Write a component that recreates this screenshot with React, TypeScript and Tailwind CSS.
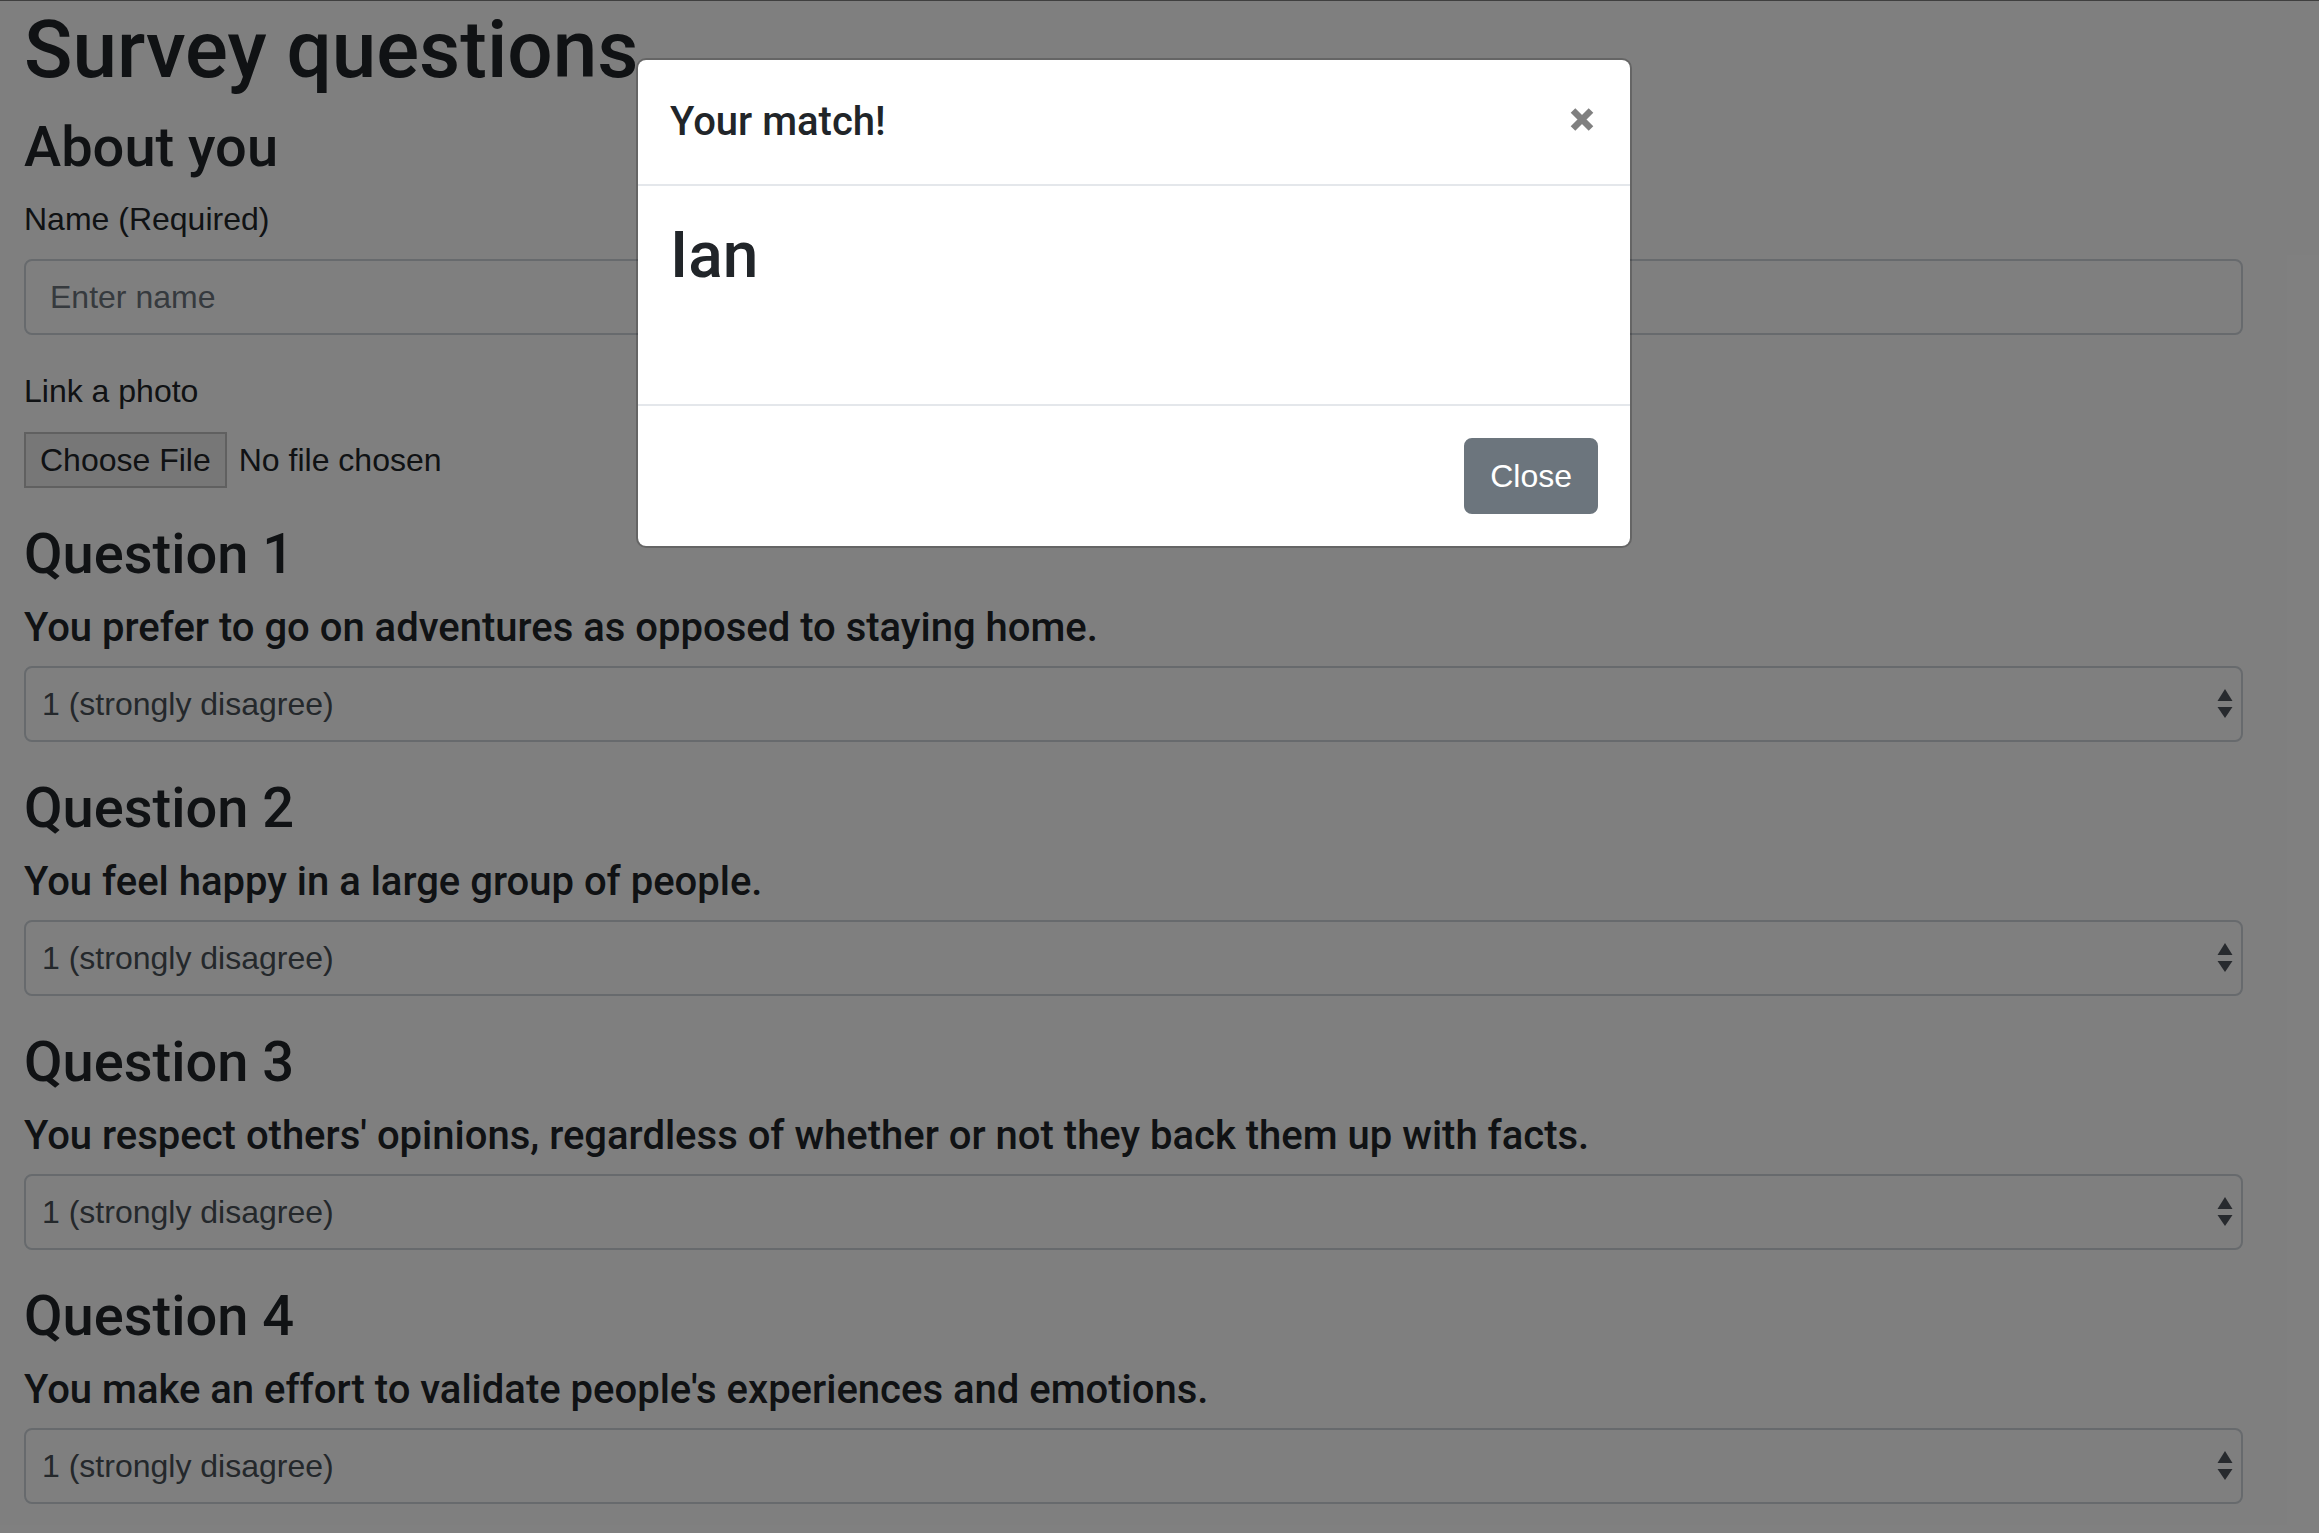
import React from "react";

const questions = [
  "You prefer to go on adventures as opposed to staying home.",
  "You feel happy in a large group of people.",
  "You respect others' opinions, regardless of whether or not they back them up with facts.",
  "You make an effort to validate people's experiences and emotions.",
];

function SelectArrows() {
  return (
    <svg width="16" height="30" viewBox="0 0 16 30" className="shrink-0">
      <polygon points="8,0 15.5,12 0.5,12" fill="#4f545c" />
      <polygon points="0.5,18 15.5,18 8,29" fill="#4f545c" />
    </svg>
  );
}

function FakeSelect() {
  return (
    <div className="flex h-[76px] items-center justify-between rounded-[8px] border-2 border-[#ced4da] bg-white pl-[16px] pr-[8px] text-[32px] leading-[48px] text-[#495057]">
      <span>1 (strongly disagree)</span>
      <SelectArrows />
    </div>
  );
}

export default function App() {
  return (
    <div className="relative h-[1533px] w-full overflow-hidden bg-white font-['Liberation_Sans',Arial,sans-serif] text-[#212529]">
      {/* Page content */}
      <div className="pl-[24px] pr-[76px]">
        <h1 className="mb-[16px] pt-[4px] font-['Roboto','Liberation_Sans',sans-serif] text-[80px] font-medium leading-[92px]">Survey questions</h1>
        <h3 className="mb-[16px] pt-[3px] font-['Roboto','Liberation_Sans',sans-serif] text-[56px] font-medium leading-[64px]">About you</h3>

        <div className="mb-[32px]">
          <label className="mb-[16px] block text-[32px] leading-[48px]">Name (Required)</label>
          <input
            type="text"
            placeholder="Enter name"
            className="block h-[76px] w-full rounded-[8px] border-2 border-[#ced4da] bg-white px-[24px] text-[32px] text-[#495057] placeholder:text-[#6c757d]"
          />
        </div>

        <div className="mb-[32px]">
          <label className="mb-[16px] block text-[32px] leading-[48px]">Link a photo</label>
          <div className="flex h-[57px] items-start">
            <div className="mt-[1px] flex h-[56px] items-center border-2 border-[#c1c1c1] bg-[#efefef] px-[14px] text-[32px] text-[#212529]">
              Choose File
            </div>
            <span className="ml-[12px] mt-[1px] flex h-[56px] items-center text-[32px]">No file chosen</span>
          </div>
        </div>

        {questions.map((q, i) => (
          <div key={i} className="mb-[32px]">
            <h3 className="mb-[16px] pt-[3px] font-['Roboto','Liberation_Sans',sans-serif] text-[56px] font-medium leading-[63px]">Question {i + 1}</h3>
            <h5 className="mb-[16px] pt-[3px] font-['Roboto','Liberation_Sans',sans-serif] text-[40px] font-medium leading-[45px]">{q}</h5>
            <FakeSelect />
          </div>
        ))}
      </div>

      {/* Backdrop */}
      <div className="absolute inset-0 bg-black/50" />
      <div className="absolute left-0 right-0 top-0 h-px bg-[#3f3f3f]" />

      {/* Modal */}
      <div className="absolute left-[636px] top-[58px] w-[996px] rounded-[10px] border-2 border-black/20 bg-white bg-clip-padding">
        <div className="flex items-start justify-between border-b-2 border-[#e4e7eb] p-[32px]">
          <h5 className="font-['Roboto','Liberation_Sans',sans-serif] text-[40px] font-medium leading-[60px] text-[#212529]">Your match!</h5>
          <button className="mr-[4px] mt-[15px]" aria-label="Close">
            <svg width="24" height="25" viewBox="0 0 24 25">
              <path d="M3 3.5 L21 21.5 M21 3.5 L3 21.5" stroke="#808080" strokeWidth="6.5" strokeLinecap="butt" />
            </svg>
          </button>
        </div>
        <div className="h-[218px] p-[32px]">
          <h2 className="font-['Roboto','Liberation_Sans',sans-serif] text-[64px] font-medium leading-[76.8px] text-[#212529]">Ian</h2>
        </div>
        <div className="flex justify-end border-t-2 border-[#e4e7eb] p-[24px]">
          <button className="m-[8px] h-[76px] rounded-[8px] border-2 border-[#6c757d] bg-[#6c757d] px-[24px] text-[32px] leading-[48px] text-white">
            Close
          </button>
        </div>
      </div>
    </div>
  );
}
